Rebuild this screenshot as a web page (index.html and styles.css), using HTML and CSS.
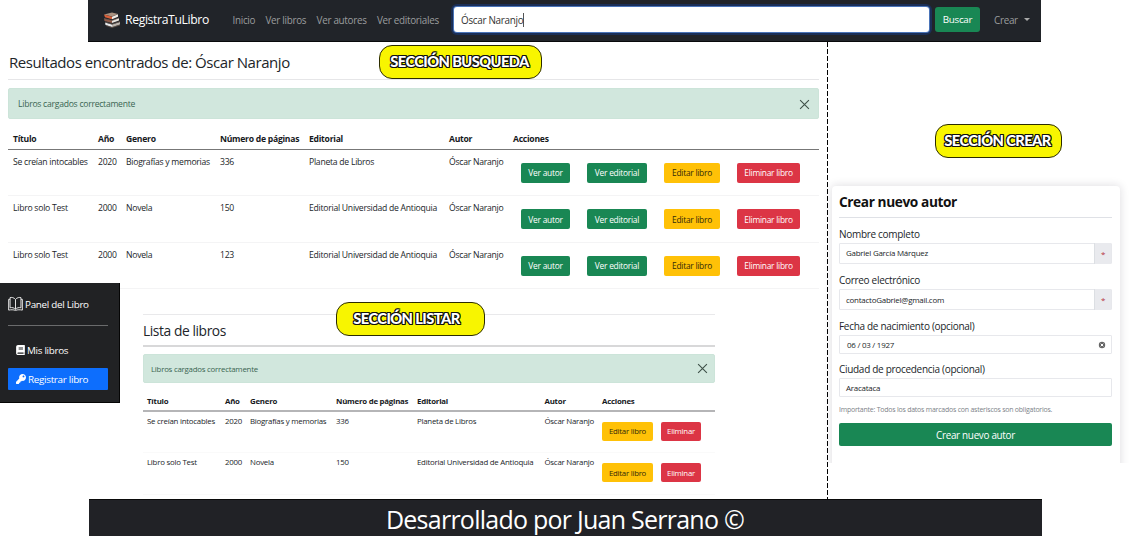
FILE: index.html
```html
<!DOCTYPE html>
<html lang="es">
<head>
<meta charset="utf-8">
<title>RegistraTuLibro</title>
<link rel="stylesheet" href="styles.css">
</head>
<body>
<nav class="navbar">
  <a class="brand">
    <svg class="brand-logo" viewBox="0 0 18 16">
      <path d="M1 2.500 9 .5l6 1.500-6 2.500z" fill="#a9917f"/>
      <path d="M1 2.500l8 2.200v2.500L2 5.300z" fill="#d9603a"/>
      <path d="M9 4.700l6-2.500v2.500L9 7.300z" fill="#f3ede6"/>
      <path d="M1 6.500l8 2v2.500L1.500 9z" fill="#8e5a48"/>
      <path d="M9 8.500l7-2.500v2.500L9 11z" fill="#e8e4de"/>
      <path d="M2 10.500l7 2V15l-6.500-2z" fill="#e5e8ea"/>
      <path d="M9 12.500l8-2.500v2.500L9 15.200z" fill="#b9b3ad"/>
      <path d="M1 6.500 9 8.500l7-2.500M2 10l7 2.200 8-2.700M3 13.500l6 2 8-2.500" fill="none" stroke="#6d5a50" stroke-width=".7"/>
    </svg>
    <span>RegistraTuLibro</span>
  </a>
  <div class="nav-links">
    <a>Inicio</a><a>Ver libros</a><a>Ver autores</a><a>Ver editoriales</a>
  </div>
  <div class="search"><span>Óscar Naranjo</span></div>
  <button class="btn btn-search">Buscar</button>
  <a class="dropdown">Crear</a>
</nav>

<main class="board">
  <div class="left">
    <section class="results">
      <header class="results-head">
        <h1>Resultados encontrados de: Óscar Naranjo</h1>
        <span class="tag tag-search">SECCIÓN BUSQUEDA</span>
      </header>
      <div class="alert">
        <span>Libros cargados correctamente</span>
        <svg class="close" viewBox="0 0 10 10"><path d="M1 1l8 8M9 1l-8 8"/></svg>
      </div>
      <table class="books">
        <colgroup><col class="c1"><col class="c2"><col class="c3"><col class="c4"><col class="c5"><col class="c6"><col></colgroup>
        <thead><tr><th>Título</th><th>Año</th><th>Genero</th><th>Número de páginas</th><th>Editorial</th><th>Autor</th><th>Acciones</th></tr></thead>
        <tbody>
          <tr><td>Se creían intocables</td><td>2020</td><td>Biografías y memorias</td><td>336</td><td>Planeta de Libros</td><td>Óscar Naranjo</td>
            <td><div class="actions"><button class="btn green author">Ver autor</button><button class="btn green editorial">Ver editorial</button><button class="btn yellow">Editar libro</button><button class="btn red">Eliminar libro</button></div></td></tr>
          <tr><td>Libro solo Test</td><td>2000</td><td>Novela</td><td>150</td><td>Editorial Universidad de Antioquia</td><td>Óscar Naranjo</td>
            <td><div class="actions"><button class="btn green author">Ver autor</button><button class="btn green editorial">Ver editorial</button><button class="btn yellow">Editar libro</button><button class="btn red">Eliminar libro</button></div></td></tr>
          <tr><td>Libro solo Test</td><td>2000</td><td>Novela</td><td>123</td><td>Editorial Universidad de Antioquia</td><td>Óscar Naranjo</td>
            <td><div class="actions"><button class="btn green author">Ver autor</button><button class="btn green editorial">Ver editorial</button><button class="btn yellow">Editar libro</button><button class="btn red">Eliminar libro</button></div></td></tr>
        </tbody>
      </table>
    </section>

    <div class="lower">
      <aside class="sidebar">
        <div class="side-title">
          <svg class="open-book" viewBox="0 0 16 16"><path d="M8 3.200C6.500 1 3.500.700 2.200 1.200V12c2-.500 4.500 0 5.800 1.600M8 3.200C9.500 1 12.500.700 13.800 1.200V12c-2-.500-4.500 0-5.800 1.600M8 3.200v10.400M2.200 3H.7v11.500c2.500-.5 5-.5 7.300.3 2.300-.8 4.800-.8 7.300-.3V3h-1.500"/></svg>
          <span>Panel del Libro</span>
        </div>
        <a class="side-link">
          <svg class="icon-book" viewBox="0 0 448 512"><path d="M448 360V24c0-13.300-10.700-24-24-24H96C43 0 0 43 0 96v320c0 53 43 96 96 96h328c13.300 0 24-10.700 24-24v-16c0-7.500-3.500-14.300-8.900-18.700-4.200-15.400-4.200-59.300 0-74.700 5.400-4.300 8.900-11.100 8.900-18.600zM128 134c0-3.300 2.700-6 6-6h212c3.300 0 6 2.700 6 6v20c0 3.300-2.700 6-6 6H134c-3.300 0-6-2.700-6-6v-20zm0 64c0-3.300 2.700-6 6-6h212c3.300 0 6 2.700 6 6v20c0 3.300-2.700 6-6 6H134c-3.300 0-6-2.700-6-6v-20zm253.400 250H96c-17.700 0-32-14.300-32-32 0-17.600 14.400-32 32-32h285.400c-1.900 17.100-1.900 46.900 0 64z"/></svg>
          <span>Mis libros</span>
        </a>
        <a class="side-link active">
          <svg class="icon-key" viewBox="0 0 512 512"><path d="M512 176c0 97.200-78.800 176-176 176-11.200 0-22.200-1.100-32.800-3.100l-24 27c-4.600 5.200-11 8.100-18 8.100H224v40c0 13.300-10.700 24-24 24h-40v40c0 13.300-10.700 24-24 24H24c-13.300 0-24-10.700-24-24v-78.100c0-6.400 2.500-12.500 7-17l161.800-161.800C162.800 213.800 160 195.200 160 176 160 78.800 238.800 0 336 0s176 78.500 176 176zm-176-48c0 26.500 21.500 48 48 48s48-21.500 48-48-21.500-48-48-48-48 21.500-48 48z"/></svg>
          <span>Registrar libro</span>
        </a>
      </aside>

      <section class="listing">
        <span class="tag tag-list">SECCIÓN LISTAR</span>
        <h2>Lista de libros</h2>
        <div class="alert">
          <span>Libros cargados correctamente</span>
          <svg class="close" viewBox="0 0 10 10"><path d="M1 1l8 8M9 1l-8 8"/></svg>
        </div>
        <table class="books compact">
          <colgroup><col class="c1"><col class="c2"><col class="c3"><col class="c4"><col class="c5"><col class="c6"><col></colgroup>
          <thead><tr><th>Título</th><th>Año</th><th>Genero</th><th>Número de páginas</th><th>Editorial</th><th>Autor</th><th>Acciones</th></tr></thead>
          <tbody>
            <tr><td>Se creían intocables</td><td>2020</td><td>Biografías y memorias</td><td>336</td><td>Planeta de Libros</td><td>Óscar Naranjo</td>
              <td><div class="actions"><button class="btn yellow">Editar libro</button><button class="btn red">Eliminar</button></div></td></tr>
            <tr><td>Libro solo Test</td><td>2000</td><td>Novela</td><td>150</td><td>Editorial Universidad de Antioquia</td><td>Óscar Naranjo</td>
              <td><div class="actions"><button class="btn yellow">Editar libro</button><button class="btn red">Eliminar</button></div></td></tr>
          </tbody>
        </table>
      </section>
    </div>
  </div>

  <div class="divider"></div>

  <div class="right">
    <span class="tag tag-create">SECCIÓN CREAR</span>
    <div class="card-frame">
      <form class="card">
        <h2>Crear nuevo autor</h2>
        <label>Nombre completo</label>
        <div class="field required"><span>Gabriel García Márquez</span><b>*</b></div>
        <label>Correo electrónico</label>
        <div class="field required"><span class="email">contactoGabriel@gmail.com</span><b>*</b></div>
        <label>Fecha de nacimiento (opcional)</label>
        <div class="field"><span class="date">06 / 03 / 1927</span>
          <svg class="clear" viewBox="0 0 8 8"><circle cx="4" cy="4" r="3.200" fill="#666"/><path d="M2.700 2.700l2.600 2.600M5.300 2.700 2.700 5.300" stroke="#fff" stroke-width="1"/></svg>
        </div>
        <label class="tight">Ciudad de procedencia (opcional)</label>
        <div class="field"><span>Aracataca</span></div>
        <p class="note">Importante: Todos los datos marcados con asteriscos son obligatorios.</p>
        <button class="btn submit">Crear nuevo autor</button>
      </form>
    </div>
  </div>
</main>

<footer class="footer">Desarrollado por Juan Serrano ©</footer>
</body>
</html>
```
FILE: styles.css
```css
* { box-sizing: border-box; letter-spacing: -.03em; }
body {
  margin: 0;
  width: 1130px;
  height: 536px;
  overflow: hidden;
  background: #fff;
  color: #212529;
  font-family: "Open Sans", "Noto Sans", sans-serif;
  font-size: 8.600px;
  white-space: nowrap;
}
h1, h2, p { margin: 0; font-weight: 400; }

/* Top bar */
.navbar {
  display: flex;
  align-items: center;
  width: 953px;
  height: 42px;
  margin-left: 88px;
  padding: 0 0 2px 15px;
  background: #212429;
  border-bottom: 1px solid #08090b;
  color: #9b9d9e;
  font-size: 9.900px;
}
.brand { display: flex; align-items: center; gap: 4px; width: 129.500px; color: #fff; font-size: 12.200px; }
.brand-logo { width: 18px; height: 16px; }
.nav-links { display: flex; gap: 10.300px; width: 221.500px; }
.search {
  display: flex;
  align-items: center;
  width: 475px;
  height: 25px;
  padding-left: 7px;
  border-radius: 3px;
  background: #fff;
  box-shadow: 0 0 0 1px #4a74b8, 0 0 0 3px #1b2f57;
  color: #333;
  font-size: 9.900px;
}
.search span { padding-top: 1px; border-right: 1px solid #555; line-height: 13px; }
.btn {
  display: flex;
  align-items: center;
  justify-content: center;
  padding: 0;
  border: 0;
  border-radius: 2px;
  color: #fff;
  font-family: inherit;
  font-size: 8.400px;
}
.btn-search { width: 45px; height: 25px; margin-left: 6px; border-radius: 3px; background: #198754; font-size: 9.800px; }
.dropdown { display: flex; align-items: center; gap: 6px; margin-left: 14px; }
.dropdown::after { content: ""; border: 3px solid transparent; border-top-color: #aaa; border-bottom: 0; }

/* Columns */
.board { display: grid; grid-template-columns: 827px 1px 302px; height: 457px; }
.divider { background: repeating-linear-gradient(#000 0 5px, #fff 5px 7px); }

.results { height: 241px; padding-left: 8px; }
.results-head { position: relative; width: 811px; height: 38px; border-bottom: 1px solid #e6e6e8; }
.results-head h1 { padding: 9px 0 0 1px; font-size: 15px; line-height: 23px; }

.alert {
  display: flex;
  align-items: center;
  justify-content: space-between;
  width: 811px;
  height: 31px;
  margin-top: 8px;
  padding: 1px 8px 0 9px;
  border: 1px solid #cce4d9;
  border-radius: 2px;
  background: #d1e7dd;
  color: #3a6552;
  font-size: 8.600px;
}
.close { width: 11px; height: 11px; fill: none; stroke: #3f5149; stroke-width: 1; }

.books { width: 811px; margin-top: 10px; border-collapse: collapse; table-layout: fixed; text-align: left; }
.books th, .books td { padding: 0 0 0 5px; vertical-align: top; }
.books thead tr { height: 20px; border-bottom: 1px solid #777; }
.books th { padding-top: 4px; color: #16191c; font-size: 8.600px; font-weight: 700; line-height: 12px; }
.books tbody tr { height: 46.500px; border-bottom: 1px solid #f4f4f5; }
.books td { padding-top: 6px; font-size: 8.650px; line-height: 12px; }
.c1 { width: 85px; }
.c2 { width: 28px; }
.c3 { width: 94px; }
.c4 { width: 89px; }
.c5 { width: 140px; }
.c6 { width: 64px; }
.actions { display: flex; gap: 17px; padding: 7px 0 0 8px; }
.actions .btn { width: 56px; height: 20px; }
.actions .author { width: 49px; }
.actions .editorial { width: 60px; }
.green, .submit { background: #198754; }
.actions .yellow { background: #ffc107; color: #33290a; }
.actions .red { width: 63px; background: #dc3545; }

/* Sidebar and book list */
.lower { display: flex; align-items: flex-start; gap: 23px; height: 216px; }
.sidebar { width: 120px; height: 119.500px; padding: 11px 11px 0 8px; background: #212224; border: solid #050505; border-width: 0 1px 1px 0; color: #fff; font-size: 9.850px; }
.side-title { display: flex; align-items: center; gap: 2px; height: 32px; padding-bottom: 11px; border-bottom: 1px solid #6a6b6c; }
.open-book { width: 15px; height: 16px; fill: none; stroke: #eee; stroke-width: 1; }
.side-link { display: flex; align-items: center; gap: 2px; height: 22px; padding-left: 8px; }
.side-link:nth-of-type(1) { margin-top: 12.500px; }
.icon-book { width: 9px; height: 10px; fill: #fff; }
.icon-key { width: 10px; height: 10px; fill: #fff; }
.side-link.active { margin-top: 7.500px; border-radius: 1px; background: #0d6efd; }

.listing { position: relative; width: 572px; margin-top: 31px; border-top: 1px solid #e9e9eb; }
.listing h2 { height: 32px; padding-top: 5px; border-bottom: 2px solid #d8d8d9; font-size: 13.800px; line-height: 22px; }
.listing .alert { width: 572px; height: 29px; margin-top: 7px; padding: 0 6px 0 7px; font-size: 7.850px; }
.compact { width: 572px; margin-top: 9.500px; }
.compact th { padding-top: 2px; font-size: 7.850px; }
.compact th, .compact td { padding-left: 4px; }
.compact thead tr { height: 18px; border-bottom: 2px solid #b5b5b7; }
.compact tbody tr { height: 42px; border-color: #fafafa; }
.compact td { padding-top: 3px; font-size: 7.850px; }
.compact .c1 { width: 78px; }
.compact .c2 { width: 25px; }
.compact .c3 { width: 86px; }
.compact .c4 { width: 81px; }
.compact .c5 { width: 127.500px; }
.compact .c6 { width: 57.500px; }
.compact .actions { gap: 8px; padding: 7px 0 0 0; }
.compact .actions .btn { width: 51px; height: 19px; font-size: 7.800px; }
.compact .actions .red { width: 40px; }

/* Section tags */
.tag {
  display: flex;
  align-items: center;
  justify-content: center;
  height: 34px;
  padding-bottom: 2px;
  border: 1px solid #2c2c00;
  border-radius: 13px;
  background: #f8f500;
  color: #fff;
  font-family: Lato, sans-serif;
  font-size: 14.700px;
  font-weight: 900;
  letter-spacing: -.04em;
  text-shadow: -1px 0 #111, 1px 0 #111, 0 -1px #111, 0 1px #111, -1px -1px #111, 1px 1px #111, 1px -1px #111, -1px 1px #111;
}
.tag-search { position: absolute; left: 371px; top: 3px; width: 163px; padding-right: 2px; }
.tag-list { position: absolute; left: 193px; top: -13px; width: 149px; padding-right: 8px; }
.tag-create { width: 127px; margin: 82px 0 0 107px; padding-right: 2px; }

/* Author form */
.card-frame { height: 286px; margin: 19px 0 0 -7px; padding: 9px 10px 0 11px; overflow: hidden; }
.card { height: 300px; padding: 0 8px 0 7px; border-radius: 4px; box-shadow: 0 0 9px 1px rgba(30, 20, 50, .13); font-size: 10px; }
.card h2 { height: 31.500px; padding-top: 4px; border-bottom: 1px solid #dfe1e6; color: #111; font-size: 13.700px; font-weight: 700; line-height: 24px; }
.card label { display: block; height: 25.300px; padding-top: 9px; line-height: 15px; }
.card .tight { height: 24px; padding-top: 7.700px; }
.field { display: flex; align-items: center; height: 19px; padding-left: 6px; border: 1px solid #e7e8ec; border-radius: 1px; font-size: 7.950px; }
.required { height: 21px; }
.field b { display: flex; align-items: center; justify-content: center; width: 17px; height: 21px; margin-left: auto; border-left: 1px solid #dcdfe3; background: #e9eaee; color: #b5303d; font-size: 8px; font-weight: 400; }
.clear { width: 8px; height: 8px; margin: 0 5px 0 auto; }
.date { padding-left: 1px; }
.note { padding-top: 7px; color: #7c8288; font-size: 6.950px; line-height: 12px; }
.submit { width: 100%; height: 23px; margin-top: 7px; font-size: 9.900px; }

.footer { width: 953px; height: 37px; margin-left: 89px; padding-right: 1px; border-top: 1px solid #0a0a0a; background: #212226; color: #fff; font-size: 25px; line-height: 39px; text-align: center; }
```
